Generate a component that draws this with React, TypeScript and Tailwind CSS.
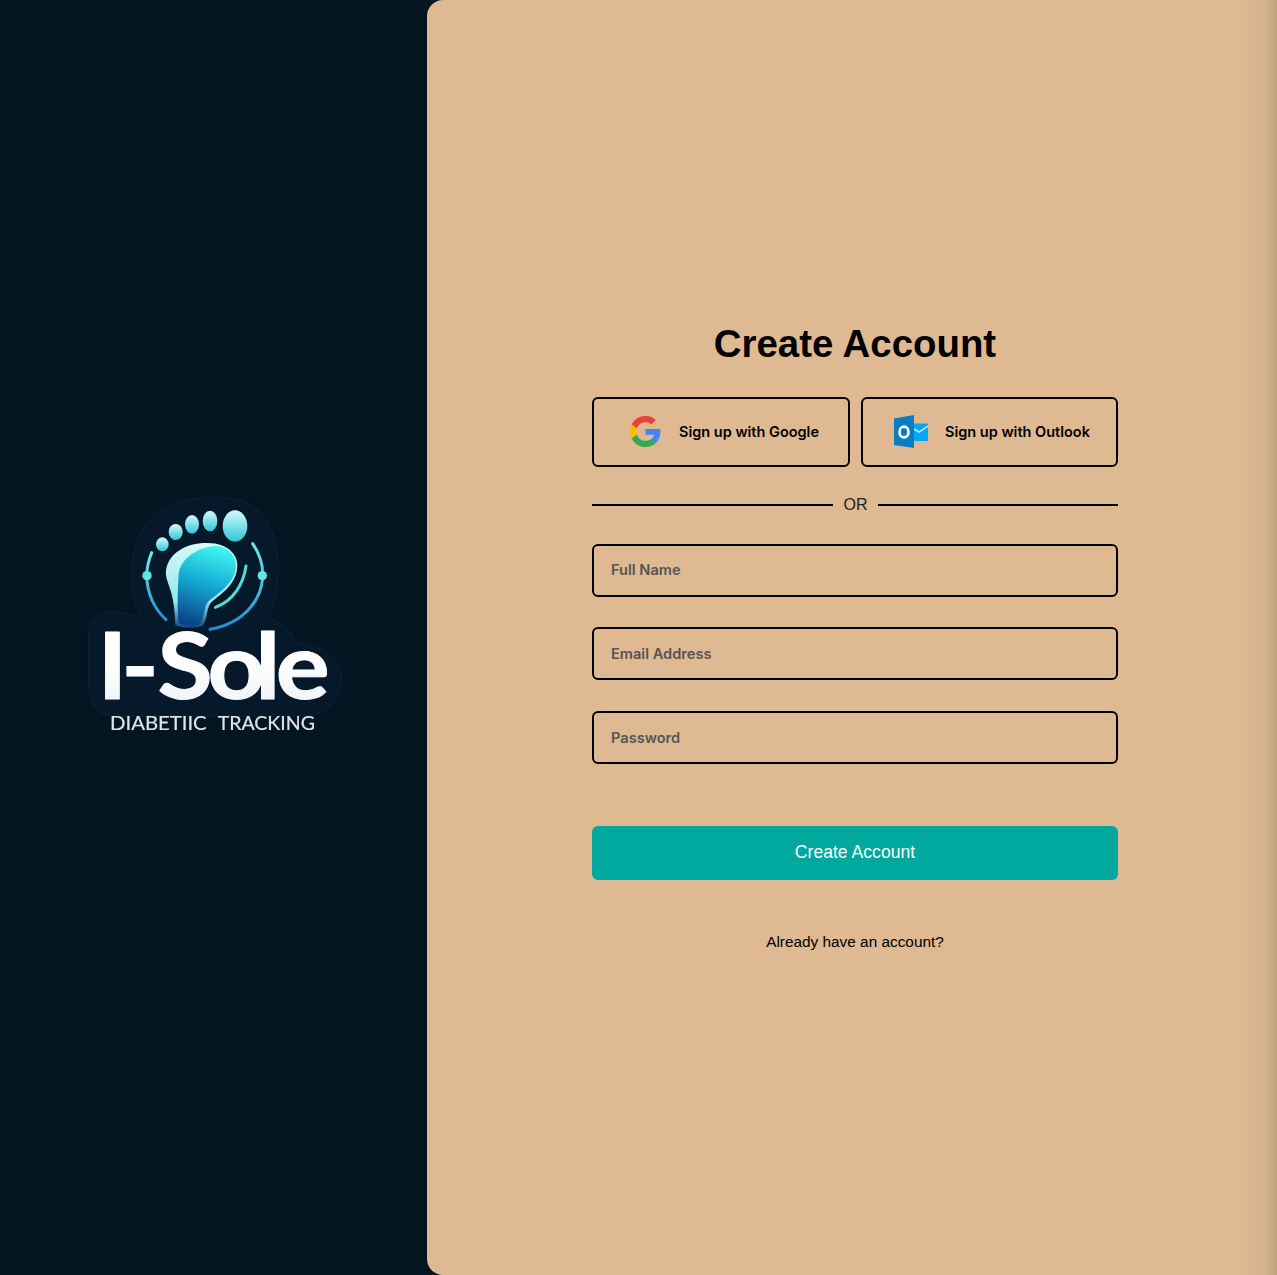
const inter = { fontFamily: 'Inter, sans-serif' };

const Logo = () => (
  <svg viewBox="0 0 870 810" className="w-[290px] h-[270px] blur-[0.5px]">
    <defs>
      <linearGradient id="footFill" x1="0.6" y1="0" x2="0.35" y2="1">
        <stop offset="0" stopColor="#3ff5f2" />
        <stop offset="0.5" stopColor="#12a5d0" />
        <stop offset="1" stopColor="#0c4488" />
      </linearGradient>
      <linearGradient id="footEdge" x1="0" y1="0" x2="0" y2="1">
        <stop offset="0" stopColor="#d8fafa" />
        <stop offset="0.7" stopColor="#8fe6ee" />
        <stop offset="1" stopColor="#0c4a85" />
      </linearGradient>
      <linearGradient id="toeFill" x1="0" y1="0" x2="0" y2="1">
        <stop offset="0" stopColor="#d4fbfa" />
        <stop offset="1" stopColor="#2cc8d8" />
      </linearGradient>
      <linearGradient id="arcFill" x1="0" y1="0" x2="0" y2="1">
        <stop offset="0" stopColor="#6ce9e2" />
        <stop offset="1" stopColor="#1d8fd0" />
      </linearGradient>
      <linearGradient id="wordFill" x1="0" y1="0" x2="0" y2="1">
        <stop offset="0.5" stopColor="#ffffff" />
        <stop offset="1" stopColor="#eaf0f5" />
      </linearGradient>
    </defs>
    {/* backing shape */}
    <path
      d="M210 410C170 300 175 190 240 115C290 50 440 35 520 60C590 90 630 170 625 280C622 340 610 385 595 415C640 420 660 450 680 485C750 490 812 530 815 590C815 655 770 695 720 705L120 705C70 695 55 650 55 600L55 450C60 405 110 385 150 395C175 400 195 405 210 410Z"
      fill="#05192b"
      stroke="#0a2438"
      strokeWidth="3"
    />
    {/* toes */}
    <ellipse cx="277" cy="190" rx="19" ry="21" fill="url(#toeFill)" />
    <ellipse cx="317" cy="153" rx="21" ry="24" fill="url(#toeFill)" />
    <ellipse cx="366" cy="130" rx="21" ry="28" fill="url(#toeFill)" />
    <ellipse cx="420" cy="120" rx="22" ry="31" fill="url(#toeFill)" />
    <ellipse cx="495" cy="135" rx="37" ry="47" fill="url(#toeFill)" />
    {/* foot */}
    <path
      d="M288 268C296 215 350 185 412 186C476 186 512 225 500 272C488 322 442 345 422 366C408 385 414 412 398 434C375 442 340 442 316 432C314 382 310 352 299 320C292 300 286 285 288 268Z"
      fill="url(#footEdge)"
    />
    <path
      d="M326 280C330 240 370 205 425 196C474 190 506 228 496 270C484 316 436 342 414 362C400 382 404 410 390 430C370 436 345 436 326 426C322 380 322 340 326 280Z"
      fill="url(#footFill)"
    />
    {/* arcs and pins */}
    <g fill="none" strokeLinecap="round" strokeWidth="9">
      <path d="M245 215C235 240 230 262 230 285C232 340 255 385 288 416" stroke="url(#arcFill)" />
      <path d="M548 188C570 220 580 255 578 290C574 350 530 425 420 445" stroke="url(#arcFill)" />
      <path d="M528 255C520 310 490 360 436 379" stroke="#4fdcdc" />
    </g>
    <circle cx="231" cy="284" r="14" fill="#5ee7e2" />
    <circle cx="577" cy="284" r="14" fill="#5ee7e2" />
    {/* wordmark */}
    <text
      x="75 140 239 375 505 561"
      y="653"
      transform="scale(1.1 1)"
      fontSize="275"
      fontWeight="700"
      fill="url(#wordFill)"
      stroke="url(#wordFill)"
      strokeWidth="3"
      strokeLinejoin="round"
      fontFamily="Lato, sans-serif"
    >
      I-Sole
    </text>
    <text x="120" y="748" fontSize="55" fontWeight="400" fill="#dfe5e8" stroke="#dfe5e8" strokeWidth="0.5" textLength="290" lengthAdjust="spacingAndGlyphs" fontFamily="Lato, sans-serif">
      DIABETIIC
    </text>
    <text x="443" y="748" fontSize="55" fontWeight="400" fill="#dfe5e8" stroke="#dfe5e8" strokeWidth="0.5" textLength="292" lengthAdjust="spacingAndGlyphs" fontFamily="Lato, sans-serif">
      TRACKING
    </text>
  </svg>
);

const GoogleIcon = () => (
  <svg viewBox="0 0 48 48" className="w-[31px] h-[31px] shrink-0">
    <path fill="#EA4335" d="M24 9.5c3.54 0 6.71 1.22 9.21 3.6l6.85-6.85C35.9 2.38 30.47 0 24 0 14.62 0 6.51 5.38 2.56 13.22l7.98 6.19C12.43 13.72 17.74 9.5 24 9.5z" />
    <path fill="#4285F4" d="M46.98 24.55c0-1.57-.15-3.09-.38-4.55H24v9.02h12.94c-.58 2.96-2.26 5.48-4.78 7.18l7.73 6c4.51-4.18 7.09-10.36 7.09-17.65z" />
    <path fill="#FBBC05" d="M10.53 28.59c-.48-1.45-.76-2.99-.76-4.59s.27-3.14.76-4.59l-7.98-6.19C.92 16.46 0 20.12 0 24c0 3.88.92 7.54 2.56 10.78l7.97-6.19z" />
    <path fill="#34A853" d="M24 48c6.48 0 11.93-2.13 15.89-5.81l-7.73-6c-2.15 1.45-4.92 2.3-8.16 2.3-6.26 0-11.57-4.22-13.47-9.91l-7.98 6.19C6.51 42.62 14.62 48 24 48z" />
  </svg>
);

const OutlookIcon = () => (
  <svg viewBox="0 0 34 34" className="w-[34px] h-[34px] shrink-0">
    <rect x="20" y="8.5" width="14" height="17.5" fill="#03a9f4" />
    <path d="M20 14l5 3 9-6" fill="none" stroke="#c4ecfc" strokeWidth="1.5" />
    <path d="M0 3.5L20 0V33L0 30Z" fill="#0a7cc4" />
    <ellipse cx="10" cy="17" rx="4.5" ry="5.4" fill="none" stroke="#ffffff" strokeWidth="2.6" />
  </svg>
);

export default function App() {
  return (
    <div className="flex h-[1275px] w-full bg-[#041522]" style={{ fontFamily: '"Liberation Sans", sans-serif' }}>
      {/* Logo side */}
      <div className="flex w-[427px] shrink-0 items-center justify-center pb-[44px] pl-[3px]">
        <Logo />
      </div>

      {/* Form side */}
      <div className="flex flex-1 flex-col items-center justify-center rounded-l-[16px] bg-[linear-gradient(90deg,#deb991_95%,#d6b390_98.5%,#c2a280_100%)] pb-[2px] pl-[6px]">
        <div className="flex w-[526px] flex-col">
          <h1 className="text-center text-[38.4px] font-bold leading-[46px] text-black">Create Account</h1>

          <div className="mt-[30px] flex gap-[11px]">
            <button className="flex h-[70px] w-[258px] items-center justify-center gap-[18px] rounded-[6px] border-2 border-black pb-[1px] pl-[7px] text-[14.5px] font-semibold text-black" style={inter}>
              <GoogleIcon />
              Sign up with Google
            </button>
            <button className="flex h-[70px] w-[257px] items-center justify-center gap-[17px] rounded-[6px] border-2 border-black pb-[1px] pl-[5px] text-[14.5px] font-semibold text-black" style={inter}>
              <OutlookIcon />
              Sign up with Outlook
            </button>
          </div>

          <div className="mt-[28px] flex h-[19px] items-center">
            <div className="h-[2px] w-[241px] bg-black" />
            <span className="pl-[10.5px] pr-[10px] text-[16px] text-[#222]">OR</span>
            <div className="h-[2px] flex-1 bg-black" />
          </div>

          <div className="mt-[30px] flex flex-col">
            <input placeholder="Full Name" className="h-[53px] rounded-[6px] border-2 border-black bg-transparent px-[17px] pb-[1px] text-[14.6px] font-semibold placeholder:text-[#555]" style={inter} />
            <input placeholder="Email Address" className="mt-[30px] h-[53px] rounded-[6px] border-2 border-black bg-transparent px-[17px] text-[14.6px] font-semibold placeholder:text-[#555]" style={inter} />
            <input placeholder="Password" className="mt-[31px] h-[53px] rounded-[6px] border-2 border-black bg-transparent px-[17px] text-[14.6px] font-semibold placeholder:text-[#555]" style={inter} />
          </div>

          <button className="mt-[62px] h-[54px] rounded-[6px] bg-[#00a89d] pb-[2px] text-[17.6px] text-white">Create Account</button>

          <p className="mt-[52px] text-center text-[15.36px] leading-[20px] text-black">Already have an account?</p>
        </div>
      </div>
    </div>
  );
}
